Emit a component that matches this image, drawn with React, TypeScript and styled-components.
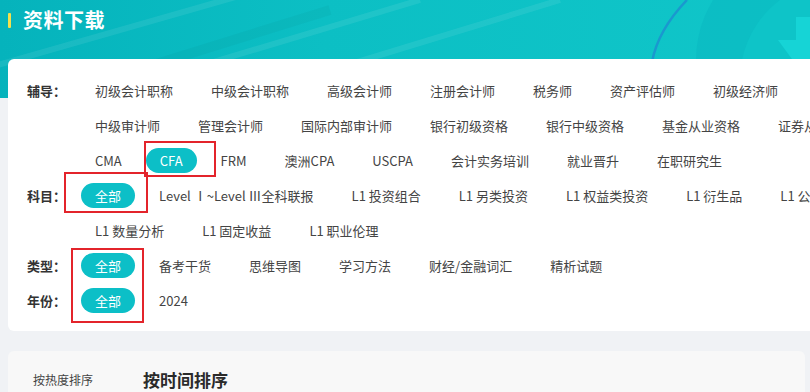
import React from "react";
import styled, { createGlobalStyle } from "styled-components";

const GlobalStyle = createGlobalStyle`
  html, body { margin: 0; padding: 0; overflow: hidden; background: #f0f2f5; }
  body { font-family: "Noto Sans CJK SC", "Noto Sans", sans-serif; }
  * { box-sizing: border-box; }
`;

const Page = styled.div`
  width: 810px;
  height: 392px;
  overflow: hidden;
  background: #f0f2f5;
`;

const Banner = styled.header`
  position: relative;
  height: 98px;
  overflow: hidden;
  background: linear-gradient(90deg, #05b3bc 0%, #0cbfc4 40%, #10c6c9 100%);
`;

const Deco = styled.svg`
  position: absolute;
  left: 0;
  top: 0;
`;

const TitleRow = styled.div`
  position: relative;
  display: flex;
  align-items: center;
  gap: 12px;
  height: 40px;
  padding: 0 0 0 8px;
`;

const TitleBar = styled.span`
  width: 3px;
  height: 15px;
  background: #f4e04d;
  border-radius: 1px;
`;

const Title = styled.h1`
  margin: 0;
  font-size: 20px;
  line-height: 22px;
  font-weight: 700;
  color: #ffffff;
  letter-spacing: 0.5px;
`;

const Main = styled.main`
  position: relative;
  margin-top: -39px;
  padding: 0 0 0 8px;
`;

const FilterCard = styled.section`
  position: relative;
  width: 880px;
  background: #ffffff;
  border-radius: 6px;
  padding: 14px 8px 13px 19px;
  display: flex;
  flex-direction: column;
`;

const Group = styled.div`
  display: flex;
  align-items: flex-start;
`;

const Label = styled.div`
  flex: 0 0 54px;
  line-height: 35px;
  font-size: 13px;
  font-weight: 700;
  color: #333333;
  white-space: nowrap;
`;

const Items = styled.div`
  flex: 1;
  display: flex;
  flex-wrap: wrap;
  column-gap: 10px;
`;

const Item = styled.span<{ $active?: boolean }>`
  height: 25px;
  line-height: 25px;
  margin: 5px 0;
  padding: 0 14px;
  border-radius: 13px;
  font-size: 13px;
  white-space: nowrap;
  color: ${(p) => (p.$active ? "#ffffff" : "#444444")};
  background: ${(p) => (p.$active ? "#0cbfc7" : "transparent")};
`;

const Mark = styled.div<{ $l: number; $t: number; $w: number; $h: number }>`
  position: absolute;
  left: ${(p) => p.$l}px;
  top: ${(p) => p.$t}px;
  width: ${(p) => p.$w}px;
  height: ${(p) => p.$h}px;
  border: 2px solid #e3242b;
  pointer-events: none;
`;

const SortCard = styled.section`
  margin-top: 20px;
  width: 797px;
  height: 70px;
  background: #f8f8f8;
  border-radius: 6px;
  display: flex;
  align-items: flex-start;
  padding: 17px 0 0 25px;
  gap: 50px;
`;

const SortOption = styled.span<{ $active?: boolean }>`
  line-height: 24px;
  font-size: ${(p) => (p.$active ? "17px" : "12px")};
  font-weight: ${(p) => (p.$active ? 700 : 400)};
  color: ${(p) => (p.$active ? "#2a2a2a" : "#444444")};
`;

type GroupData = { label: string; items: string[]; active?: string };

const groups: GroupData[] = [
  {
    label: "辅导：",
    active: "CFA",
    items: [
      "初级会计职称", "中级会计职称", "高级会计师", "注册会计师", "税务师", "资产评估师", "初级经济师",
      "中级审计师", "管理会计师", "国际内部审计师", "银行初级资格", "银行中级资格", "基金从业资格", "证券从业资格",
      "CMA", "CFA", "FRM", "澳洲CPA", "USCPA", "会计实务培训", "就业晋升", "在职研究生",
    ],
  },
  {
    label: "科目：",
    active: "全部",
    items: [
      "全部", "Level Ⅰ~Level Ⅲ全科联报", "L1 投资组合", "L1 另类投资", "L1 权益类投资", "L1 衍生品", "L1 公司金融",
      "L1 数量分析", "L1 固定收益", "L1 职业伦理",
    ],
  },
  {
    label: "类型：",
    active: "全部",
    items: ["全部", "备考干货", "思维导图", "学习方法", "财经/金融词汇", "精析试题"],
  },
  { label: "年份：", active: "全部", items: ["全部", "2024"] },
];

function HeaderArt() {
  return (
    <Deco width="810" height="98" viewBox="0 0 810 98">
      <g stroke="#ffffff" strokeOpacity="0.08" strokeWidth="6">
        <line x1="-20" y1="70" x2="260" y2="-10" />
        <line x1="120" y1="90" x2="420" y2="0" />
        <line x1="200" y1="110" x2="560" y2="0" />
      </g>
      <g stroke="#000000" strokeOpacity="0.03" strokeWidth="10">
        <line x1="40" y1="100" x2="330" y2="10" />
      </g>
      <circle cx="810" cy="60" r="114" fill="#08b5bd" fillOpacity="0.4" />
      <circle cx="840" cy="80" r="100" fill="#0ec4c8" />
      <path d="M687 0 Q658 30 652 62" fill="none" stroke="#1a98cf" strokeWidth="2.5" />
      <path d="M796 17 L820 17 L820 70 L800 70 L778 40 L796 40 Z" fill="#16d4d6" />
    </Deco>
  );
}

export default function App() {
  return (
    <Page>
      <GlobalStyle />
      <Banner>
        <HeaderArt />
        <TitleRow>
          <TitleBar />
          <Title>资料下载</Title>
        </TitleRow>
      </Banner>
      <Main>
        <FilterCard>
          {groups.map((g) => (
            <Group key={g.label}>
              <Label>{g.label}</Label>
              <Items>
                {g.items.map((it) => (
                  <Item key={it} $active={it === g.active}>
                    {it}
                  </Item>
                ))}
              </Items>
            </Group>
          ))}
          <Mark $l={136} $t={82} $w={72} $h={36} />
          <Mark $l={56} $t={113} $w={84} $h={41} />
          <Mark $l={63} $t={189} $w={73} $h={75} />
        </FilterCard>
        <SortCard>
          <SortOption>按热度排序</SortOption>
          <SortOption $active>按时间排序</SortOption>
        </SortCard>
      </Main>
    </Page>
  );
}
